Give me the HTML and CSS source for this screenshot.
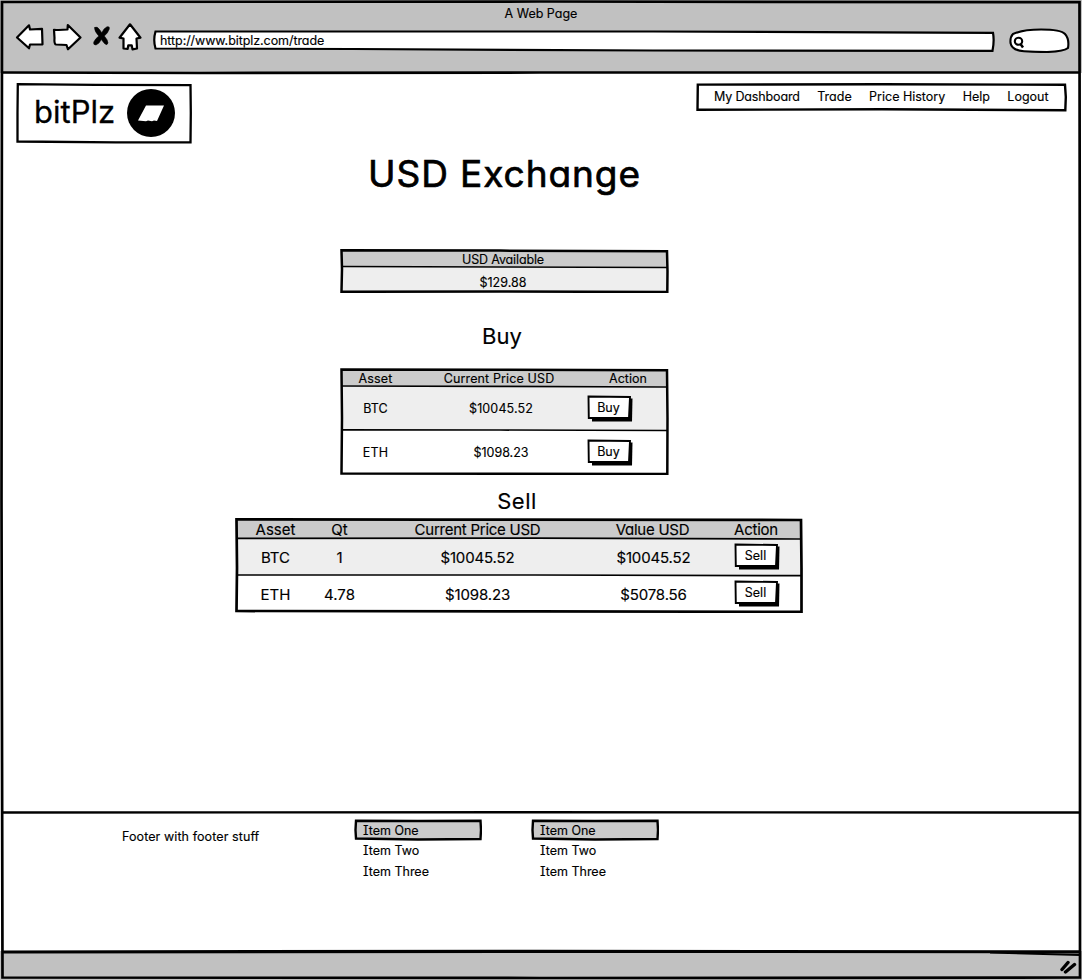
FILE: index.html
```html
<!DOCTYPE html>
<html lang="en">
<head>
<meta charset="utf-8">
<title>A Web Page</title>
<link rel="stylesheet" href="styles.css">
</head>
<body>
<div class="window">
  <header class="chrome">
    <div class="chrome-title"><span class="t">A Web Page</span></div>
    <div class="toolbar">
      <svg class="nav-icons" width="130" height="32" viewBox="14 20 130 32">
        <g fill="#fff" stroke="#000" stroke-width="2.2" stroke-linejoin="round">
          <path d="M17 37.500L29 25.300L30 29.500L42 28.800L42.500 44.300L30 44.500L29 48.300Z"/>
          <path d="M54 29.800Q60 30.300 67.500 29.500L67.800 25L80.500 37.500L68 49.300L66.500 45L56 44.500Q54 44 54.500 38Z"/>
          <path d="M130 24.300L140.500 37.700L136.500 38.500L137 48.500L132.500 49.300L131.700 45.300L128.300 45.300L127.700 48.800L123.500 48.500L123.500 38.500L119.500 37.700Z"/>
        </g>
        <path d="M94.500 27.500Q97 26 99.500 29.500L101.800 32.800Q103.500 28.500 107 26.800Q110 26 109.300 29Q108 33 104.300 36Q107.500 39.500 108 43Q107 46 104.500 43.500L101.300 39.500Q99.500 43.500 96 45Q93 45 93.800 42Q95.500 38.500 98.800 36Q94.500 31.500 94.500 27.500Z" stroke="#000" stroke-width="0.600"/>
      </svg>
      <div class="address">
        <svg class="sketch" viewBox="0 0 842 22" preserveAspectRatio="none"><path d="M2.500 1.500L500 1.500L840 2.800Q841.500 11 839.500 20.800L500 20.500L200 19L2.500 18.500Q0 10 2.500 1.500Z" fill="#fff" stroke="#000" stroke-width="2.200"/></svg>
        <span class="t url">http://www.bitplz.com/trade</span>
      </div>
      <svg class="search" width="62" height="26" viewBox="1008 27 62 26">
        <path d="M1013 34Q1023 29.500 1041 29.500Q1061 29.500 1065 34Q1069.500 39 1068 48Q1064 51.500 1047 52Q1035 52 1024 51.200Q1012 50.500 1010.500 43Q1010 37 1013 34Z" fill="#fff" stroke="#000" stroke-width="2.100"/>
        <ellipse cx="1018.500" cy="41.300" rx="3.700" ry="3.500" fill="none" stroke="#000" stroke-width="2.100"/>
        <path d="M1020.500 44L1023 47.500" stroke="#000" stroke-width="2.500"/>
      </svg>
    </div>
  </header>

  <main class="page">
    <div class="topbar">
      <div class="brand">
        <svg class="sketch" viewBox="0 0 176 61" preserveAspectRatio="none"><path d="M1.800 1.200L80 1.800L174.500 2.200L174.800 30L174.500 59.300L100 59.300L1.500 58.500L1.500 30Z" fill="#fff" stroke="#000" stroke-width="2.300"/></svg>
        <span class="t brand-name">bitPlz</span>
        <svg class="brand-mark" width="50" height="50" viewBox="0 0 50 50"><circle cx="25" cy="25" r="24" fill="#000"/><path d="M20 17.500L38 17.500L31 33L28 32.500L26 33.200L22 32.500L20 33.300L12 32.500Z" fill="#fff"/></svg>
      </div>
      <nav class="menu">
        <svg class="sketch" viewBox="0 0 372 29" preserveAspectRatio="none"><path d="M1.800 1.600L186 1.300L369 1.800L369.800 14L369.300 27.300L186 26.300L1.500 26.800Z" fill="#fff" stroke="#000" stroke-width="2.400"/></svg>
        <span class="t snug">My Dashboard</span>
        <span class="t">Trade</span>
        <span class="t">Price History</span>
        <span class="t">Help</span>
        <span class="t">Logout</span>
      </nav>
    </div>

    <h1 class="heading"><span class="t">USD Exchange</span></h1>

    <section class="table balance">
      <svg class="sketch" viewBox="0 0 329 44" preserveAspectRatio="none"><path d="M1.500 1.500L327 2L327 18L1.500 17.500Z" fill="#cbcbcb"/><path d="M1.500 17.500L327 18L327 42L1.500 42Z" fill="#eee"/><path d="M1.500 17.500L160 18L327 18.500" stroke="#000" stroke-width="1.500" fill="none"/><path d="M1.500 1.300L160 1.600L327 2.300L327.500 22L327.300 43L160 42.500L1.500 42.800L2 20Z" fill="none" stroke="#000" stroke-width="2.500"/></svg>
      <div class="row head"><span class="t snug">USD Available</span></div>
      <div class="row"><span class="t">$129.88</span></div>
    </section>

    <h2 class="buy-title"><span class="t">Buy</span></h2>

    <section class="table buy">
      <svg class="sketch" viewBox="0 0 329 107" preserveAspectRatio="none"><path d="M1.500 1.500L327 2L327 18L1.500 17.500Z" fill="#cbcbcb"/><path d="M1.500 17.500L327 18V62H1.500Z" fill="#eee"/><path d="M1.500 62H327V105H1.500Z" fill="#fff"/><path d="M1.500 18L160 18.400L327 19M1.500 61.800L160 62L327 62.500" stroke="#000" stroke-width="1.700" fill="none"/><path d="M1.500 1.400L160 1.800L327 2.300L327.500 50L327.300 106L160 105.700L1.500 105.500L2 50Z" fill="none" stroke="#000" stroke-width="2.500"/></svg>
      <div class="row head"><span class="t wide">Asset</span><span class="t wide">Current Price USD</span><span class="t">Action</span></div>
      <div class="row"><span class="t wide">BTC</span><span class="t price wide">$10045.52</span><button class="btn"><svg class="sketch" viewBox="0 0 46 27"><path d="M5 4L45.500 3.500L45 26.500H5Z"/><path d="M1.500 1.500L43 2L42 22.800L1.800 23Z" fill="#fff" stroke="#000" stroke-width="1.900"/></svg><span class="t">Buy</span></button></div>
      <div class="row"><span class="t wide">ETH</span><span class="t price">$1098.23</span><button class="btn"><svg class="sketch" viewBox="0 0 46 27"><path d="M5 4L45.500 3.500L45 26.500H5Z"/><path d="M1.500 1.500L43 2L42 22.800L1.800 23Z" fill="#fff" stroke="#000" stroke-width="1.900"/></svg><span class="t">Buy</span></button></div>
    </section>

    <h2 class="sell-title"><span class="t">Sell</span></h2>

    <section class="table sell">
      <svg class="sketch" viewBox="0 0 568 95" preserveAspectRatio="none"><path d="M1.500 1.500H566V20H1.500Z" fill="#cbcbcb"/><path d="M1.500 20H566V57H1.500Z" fill="#eee"/><path d="M1.500 57H566V93H1.500Z" fill="#fff"/><path d="M1.500 20.300L300 20.200L566 21M1.500 57L300 57L566 57.700" stroke="#000" stroke-width="1.700" fill="none"/><path d="M1.500 1.300L200 1.600L566 2L566.500 50L566.500 93.800L300 93.400L1.500 93L2 50Z" fill="none" stroke="#000" stroke-width="2.700"/></svg>
      <div class="row head"><span class="t">Asset</span><span class="t">Qt</span><span class="t snug">Current Price USD</span><span class="t snug">Value USD</span><span class="t snug">Action</span></div>
      <div class="row"><span class="t">BTC</span><span class="t">1</span><span class="t snug">$10045.52</span><span class="t value snug">$10045.52</span><button class="btn"><svg class="sketch" viewBox="0 0 46 27"><path d="M5 4L45.500 3.500L45 26.500H5Z"/><path d="M1.500 1.500L43 2L42 22.800L1.800 23Z" fill="#fff" stroke="#000" stroke-width="1.900"/></svg><span class="t">Sell</span></button></div>
      <div class="row"><span class="t">ETH</span><span class="t">4.78</span><span class="t snug">$1098.23</span><span class="t value snug">$5078.56</span><button class="btn"><svg class="sketch" viewBox="0 0 46 27"><path d="M5 4L45.500 3.500L45 26.500H5Z"/><path d="M1.500 1.500L43 2L42 22.800L1.800 23Z" fill="#fff" stroke="#000" stroke-width="1.900"/></svg><span class="t">Sell</span></button></div>
    </section>
  </main>

  <footer class="footer">
    <p class="footer-note"><span class="t">Footer with footer stuff</span></p>
    <ul class="list list-a">
      <li class="selected"><svg class="sketch" viewBox="0 0 128 22"><path d="M2 1.800L64 2L126.500 1.800L127 11L126.500 20L64 20.500L2 19.500L1.500 11Z" fill="#cbcbcb" stroke="#000" stroke-width="2.400"/></svg><span class="t">Item One</span></li>
      <li><span class="t">Item Two</span></li>
      <li><span class="t">Item Three</span></li>
    </ul>
    <ul class="list list-b">
      <li class="selected"><svg class="sketch" viewBox="0 0 128 22"><path d="M2 1.800L64 2L126.500 1.800L127 11L126.500 20L64 20.500L2 19.500L1.500 11Z" fill="#cbcbcb" stroke="#000" stroke-width="2.400"/></svg><span class="t">Item One</span></li>
      <li><span class="t">Item Two</span></li>
      <li><span class="t">Item Three</span></li>
    </ul>
  </footer>

  <div class="statusbar">
    <svg class="grip" width="18" height="14" viewBox="1059 960 18 14"><path d="M1062 969.500L1068 962.500M1065.500 972L1074.500 964.500" stroke="#000" stroke-width="3.400" stroke-linecap="round"/></svg>
  </div>

  <svg class="frame" viewBox="0 0 1082 980" fill="none" stroke="#000">
    <path d="M2 2L540 1.500L1079.500 2.200L1080 500L1080 977.500L540 978L2.500 977.500L1.500 500Z" stroke-width="2.700"/>
    <path d="M2 72.500L200 73L540 72.500L1080 72.500" stroke-width="2.700"/>
    <path d="M2 812.500L540 812.300L1080 812.500" stroke-width="2.400"/>
    <path d="M2 952L540 951.300L1080 951.800" stroke-width="3.200"/>
    <path d="M990 952.500L1080 955" stroke-width="2"/>
  </svg>
</div>
</body>
</html>
```
FILE: styles.css
```css
* { box-sizing: border-box; margin: 0; padding: 0; }
body { width: 1082px; height: 980px; background: #fff; color: #000; font-family: Inter, "Liberation Sans", sans-serif; font-feature-settings: "cv11"; font-size: 12.5px; line-height: 16px; overflow: hidden; -webkit-text-stroke: 0.15px #000; }
.window { position: relative; display: grid; grid-template-rows: 73px 739px 139px 29px; width: 1082px; height: 980px; isolation: isolate; }
.frame { position: absolute; inset: 0; width: 1082px; height: 980px; pointer-events: none; }
.t { display: inline-block; white-space: nowrap; }
.snug { letter-spacing: -0.14px; }
.wide { letter-spacing: 0.13px; }
.url { letter-spacing: -0.07px; }
.sketch { position: absolute; inset: 0; width: 100%; height: 100%; z-index: -1; }

.chrome { background: #c1c1c1; }
.chrome-title { height: 20px; padding-top: 6px; text-align: center; }
.toolbar { display: flex; align-items: flex-start; padding-left: 14px; }
.address { position: relative; z-index: 0; width: 842px; height: 22px; margin: 10px 0 0 9px; padding: 3px 0 0 7px; }
.search { margin: 7px 0 0 13px; }

.topbar { display: flex; justify-content: space-between; align-items: flex-start; padding: 10px 14px 0 16px; height: 78px; }
.brand { position: relative; z-index: 0; display: flex; align-items: center; width: 176px; height: 61px; padding-left: 18px; font-size: 31px; line-height: 36px; }
.brand-name { padding-bottom: 4px; -webkit-text-stroke-width: 0.3px; }
.brand-mark { margin: 0 16px 1px auto; }
.menu { position: relative; z-index: 0; display: flex; width: 372px; height: 29px; padding: 6px 0 0 18px; gap: 17.4px; }

h1, h2 { font-weight: 400; text-align: center; }
.heading { width: 1009px; height: 98px; font-size: 37px; line-height: 45px; letter-spacing: 0.93px; -webkit-text-stroke-width: 0.7px; }
.buy-title { width: 1004px; height: 75px; padding-top: 29px; font-size: 22px; line-height: 28px; }
.sell-title { width: 1034px; height: 43px; padding-top: 12px; font-size: 22px; line-height: 28px; letter-spacing: 0.5px; }

.table { position: relative; z-index: 0; }
.row { display: grid; align-items: center; justify-items: center; }
.balance .t, .buy .t, .btn .t { padding-top: 2px; }
.balance { width: 329px; height: 44px; margin-left: 339px; padding-right: 1px; }
.balance .sketch { left: 1px; }
.balance .row { height: 26px; padding-top: 1px; }
.balance .head { height: 19px; padding-top: 0; }
.buy { width: 329px; height: 107px; margin-left: 340px; }
.buy .row { height: 44px; grid-template-columns: 71px 176px 82px; }
.buy .head { height: 18px; padding-top: 0.5px; }
.price { margin-left: 4px; }
.sell { width: 568px; height: 95px; margin-left: 235px; font-size: 15px; }
.sell .row { height: 37px; grid-template-columns: 81px 47px 229px 121px 86px; }
.sell .head { height: 21px; padding-top: 3px; }
.sell .head .snug { letter-spacing: -0.25px; }
.value { margin-left: 2px; }
.btn { position: relative; z-index: 0; width: 46px; height: 27px; padding: 0 3px 3px 0; border: 0; background: none; font: inherit; font-size: 12.5px; color: #000; font-feature-settings: inherit; }
.buy .btn { justify-self: start; }
.sell .btn { margin: 0 0 3px 2px; }

.footer { display: flex; align-items: flex-start; }
.footer-note { width: 354px; padding: 17px 0 0 122px; letter-spacing: 0.09px; }
.list { width: 128px; margin-top: 7px; list-style: none; font-feature-settings: "cv11", "cv08"; }
.list-b { margin-left: 49px; }
.list li { position: relative; z-index: 0; height: 21px; padding: 3px 0 0 9px; }
.list .selected { padding-top: 4px; }
.list .selected .sketch { height: 22px; }
.statusbar { display: flex; justify-content: flex-end; background: #c1c1c1; padding: 9px 5px 0 0; }
```
